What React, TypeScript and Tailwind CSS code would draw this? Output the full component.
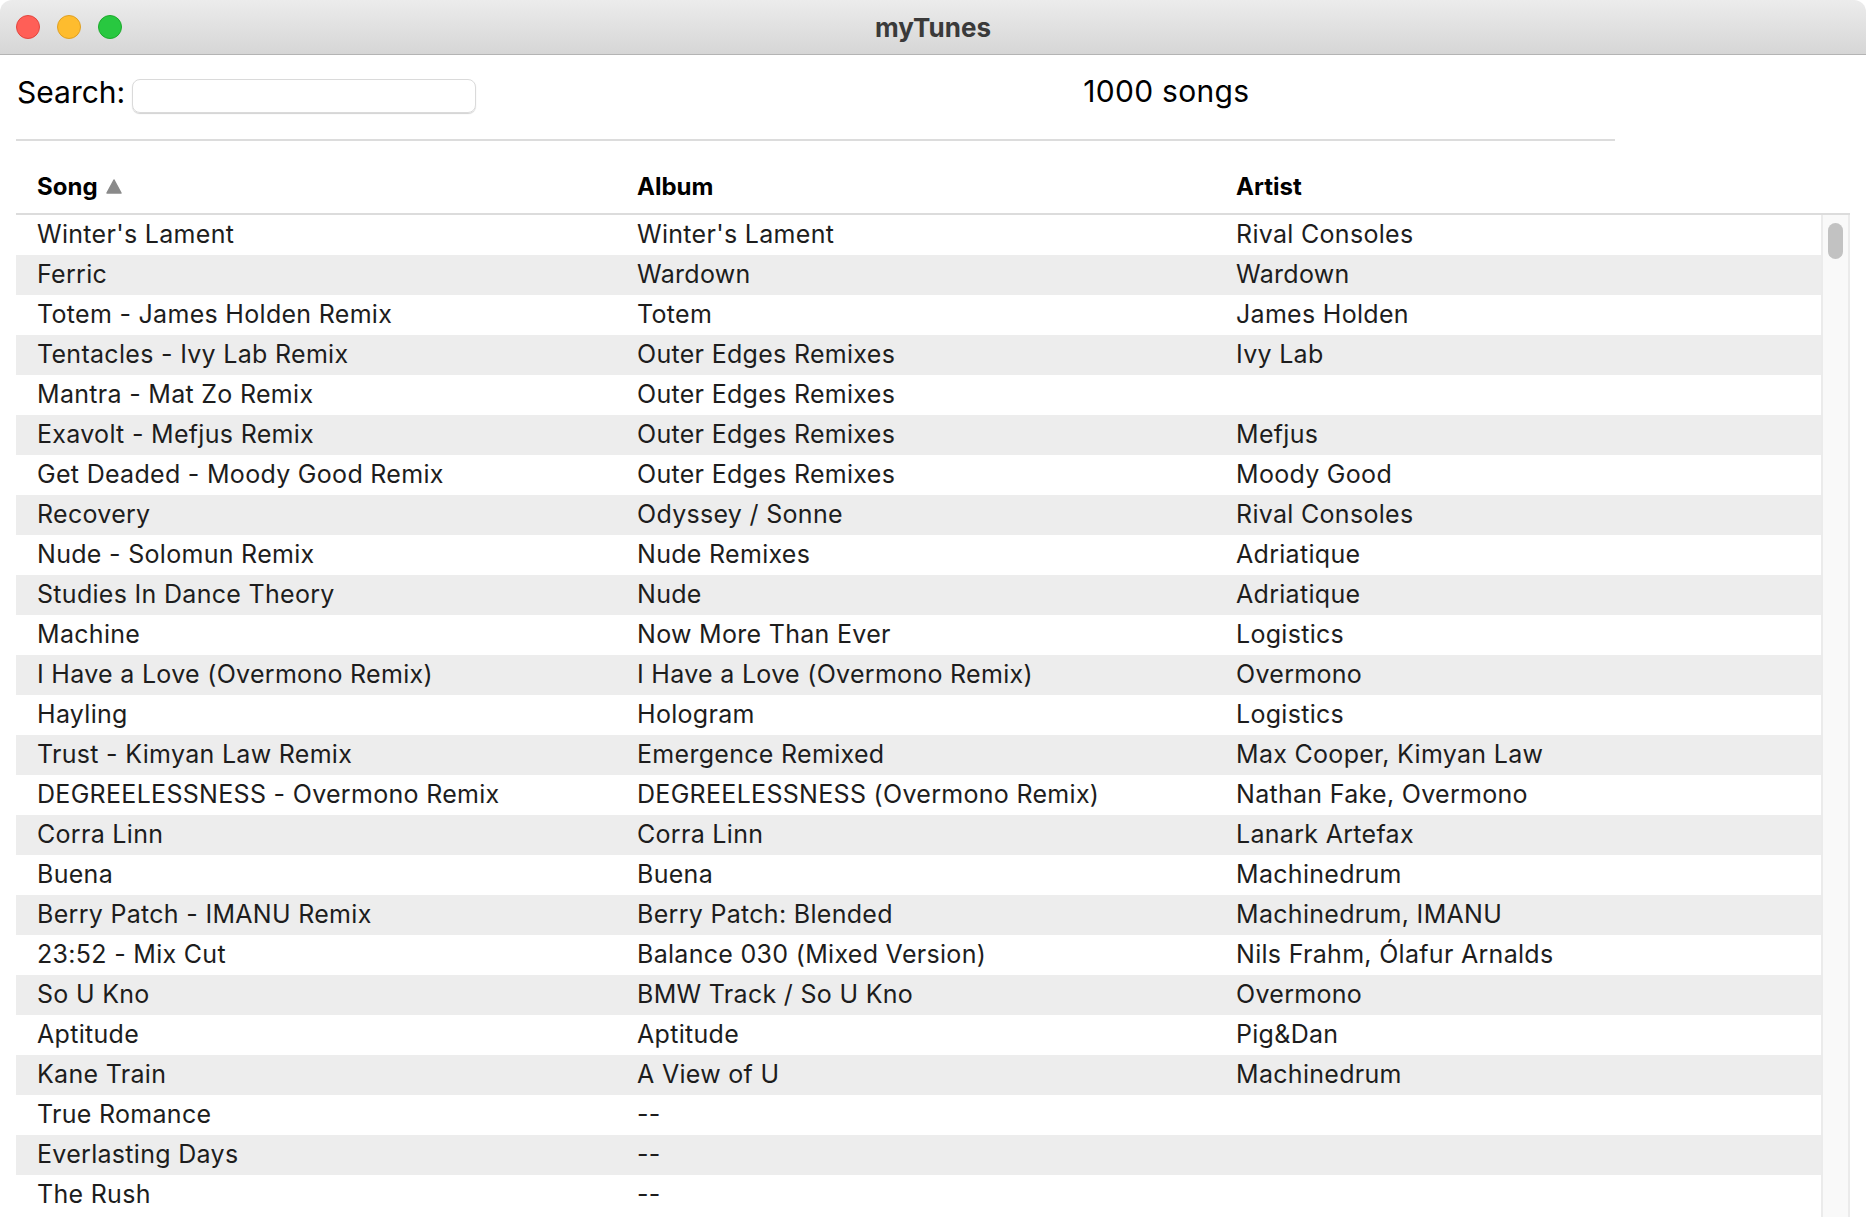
import React from "react";

const songs: [string, string, string][] = [
  ["Winter's Lament", "Winter's Lament", "Rival Consoles"],
  ["Ferric", "Wardown", "Wardown"],
  ["Totem - James Holden Remix", "Totem", "James Holden"],
  ["Tentacles - Ivy Lab Remix", "Outer Edges Remixes", "Ivy Lab"],
  ["Mantra - Mat Zo Remix", "Outer Edges Remixes", ""],
  ["Exavolt - Mefjus Remix", "Outer Edges Remixes", "Mefjus"],
  ["Get Deaded - Moody Good Remix", "Outer Edges Remixes", "Moody Good"],
  ["Recovery", "Odyssey / Sonne", "Rival Consoles"],
  ["Nude - Solomun Remix", "Nude Remixes", "Adriatique"],
  ["Studies In Dance Theory", "Nude", "Adriatique"],
  ["Machine", "Now More Than Ever", "Logistics"],
  ["I Have a Love (Overmono Remix)", "I Have a Love (Overmono Remix)", "Overmono"],
  ["Hayling", "Hologram", "Logistics"],
  ["Trust - Kimyan Law Remix", "Emergence Remixed", "Max Cooper, Kimyan Law"],
  ["DEGREELESSNESS - Overmono Remix", "DEGREELESSNESS (Overmono Remix)", "Nathan Fake, Overmono"],
  ["Corra Linn", "Corra Linn", "Lanark Artefax"],
  ["Buena", "Buena", "Machinedrum"],
  ["Berry Patch - IMANU Remix", "Berry Patch: Blended", "Machinedrum, IMANU"],
  ["23:52 - Mix Cut", "Balance 030 (Mixed Version)", "Nils Frahm, Ólafur Arnalds"],
  ["So U Kno", "BMW Track / So U Kno", "Overmono"],
  ["Aptitude", "Aptitude", "Pig&Dan"],
  ["Kane Train", "A View of U", "Machinedrum"],
  ["True Romance", "--", ""],
  ["Everlasting Days", "--", ""],
  ["The Rush", "--", ""],
];

const App = () => {
  return (
    <div className="w-[1866px] h-[1232px] bg-white overflow-hidden font-['Inter',sans-serif] text-[#1d1d1d]">
      {/* Title bar */}
      <div className="h-[55px] grid grid-cols-[1fr_auto_1fr] items-center rounded-t-[12px] bg-gradient-to-b from-[#ececec] to-[#d6d6d6] border-b border-[#b4b4b4]">
        <div className="flex items-center gap-[17px] pl-[16px]">
          <span className="w-[24px] h-[24px] rounded-full bg-[#ff5f57] border border-[#e2463f]" />
          <span className="w-[24px] h-[24px] rounded-full bg-[#febc2e] border border-[#dfa023]" />
          <span className="w-[24px] h-[24px] rounded-full bg-[#28c840] border border-[#1daa2c]" />
        </div>
        <div className="text-[26px] font-bold text-[#3a3a3a]">myTunes</div>
        <div />
      </div>

      <div className="pl-[16px]">
        {/* Search row */}
        <div className="flex items-center mt-[24px] h-[34px]">
          <span className="text-[30px] text-black pl-[1px] mb-[8px]">Search:</span>
          <input className="ml-[7px] w-[344px] h-[34px] rounded-[8px] border border-[#dadada] shadow-[0_1px_1px_rgba(0,0,0,0.18)] outline-none" />
          <span className="ml-[607px] text-[30px] text-black tracking-[0.3px] mb-[10px]">1000 songs</span>
        </div>
        <div className="mt-[26px] w-[1599px] h-[2px] bg-[#dcdcdc]" />

        {/* Header */}
        <div className="w-[1834px] mt-[26px] border-b-2 border-[#dcdcdc] pb-[6px]">
          <div className="flex h-[40px] items-center text-[24px] font-bold text-black">
            <div className="w-[600px] pl-[21px] flex items-center gap-[8px]">
              Song
              <svg width="16" height="15" viewBox="0 0 16 15" className="mt-[-2px]">
                <path d="M8 1 L15 14 L1 14 Z" fill="#8a8a8a" stroke="#8a8a8a" strokeLinejoin="round" strokeWidth="1.5" />
              </svg>
            </div>
            <div className="w-[600px] pl-[21px]">Album</div>
            <div className="pl-[20px]">Artist</div>
          </div>
        </div>

        {/* Rows + scrollbar */}
        <div className="flex h-[1002px]">
          <div className="w-[1805px] overflow-hidden">
            {songs.map((s, i) => (
              <div
                key={i}
                className={`flex h-[40px] items-center text-[25px] tracking-[0.3px] ${i % 2 === 1 ? "bg-[#ededed]" : "bg-white"}`}
              >
                <div className="w-[600px] pl-[21px] whitespace-nowrap">{s[0]}</div>
                <div className="w-[600px] pl-[21px] whitespace-nowrap">{s[1]}</div>
                <div className="pl-[20px] whitespace-nowrap">{s[2]}</div>
              </div>
            ))}
          </div>
          <div className="w-[29px] bg-[#f9f9f9] border-l-2 border-r-2 border-[#ebebeb] pt-[8px] flex justify-center">
            <div className="w-[15px] h-[36px] rounded-full bg-[#c2c2c2]" />
          </div>
        </div>
      </div>
    </div>
  );
};

export default App;
